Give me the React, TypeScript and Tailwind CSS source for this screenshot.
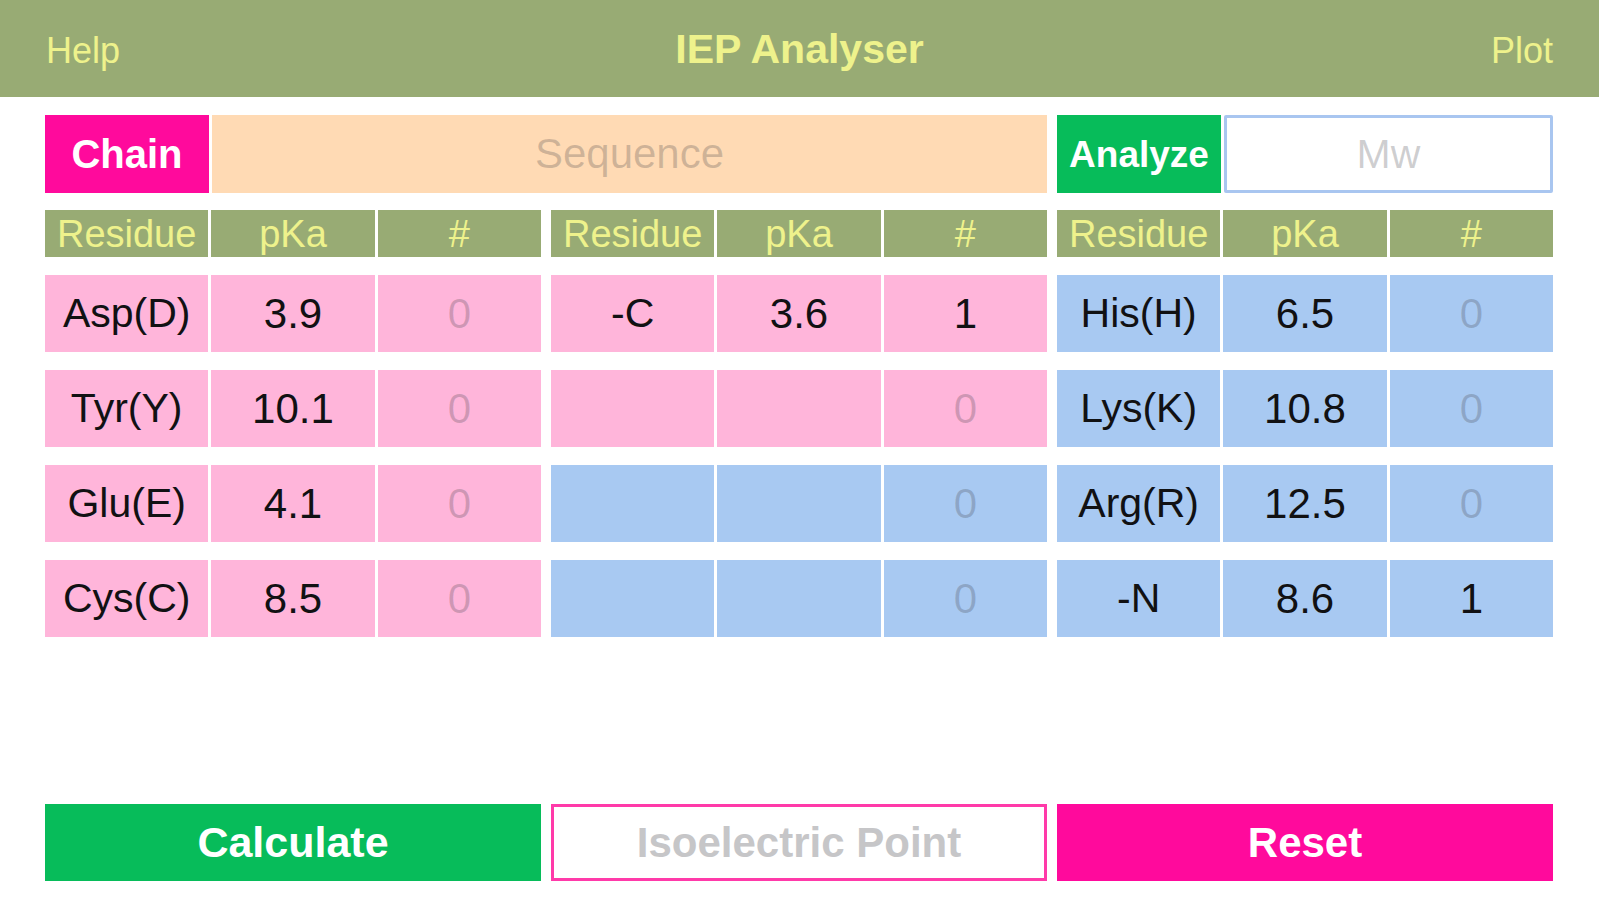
import React from "react";

type Cell = { label: string; pka: string; count: string; dim: boolean };

const PINK = "bg-[#ffb5da]";
const BLUE = "bg-[#a8c9f2]";

const groups: { rows: (Cell & { color: string })[] }[] = [
  {
    rows: [
      { label: "Asp(D)", pka: "3.9", count: "0", dim: true, color: PINK },
      { label: "Tyr(Y)", pka: "10.1", count: "0", dim: true, color: PINK },
      { label: "Glu(E)", pka: "4.1", count: "0", dim: true, color: PINK },
      { label: "Cys(C)", pka: "8.5", count: "0", dim: true, color: PINK },
    ],
  },
  {
    rows: [
      { label: "-C", pka: "3.6", count: "1", dim: false, color: PINK },
      { label: "", pka: "", count: "0", dim: true, color: PINK },
      { label: "", pka: "", count: "0", dim: true, color: BLUE },
      { label: "", pka: "", count: "0", dim: true, color: BLUE },
    ],
  },
  {
    rows: [
      { label: "His(H)", pka: "6.5", count: "0", dim: true, color: BLUE },
      { label: "Lys(K)", pka: "10.8", count: "0", dim: true, color: BLUE },
      { label: "Arg(R)", pka: "12.5", count: "0", dim: true, color: BLUE },
      { label: "-N", pka: "8.6", count: "1", dim: false, color: BLUE },
    ],
  },
];

function HeaderCells() {
  return (
    <div className="grid grid-cols-3 gap-x-[3px]">
      {["Residue", "pKa", "#"].map((t) => (
        <div
          key={t}
          className="h-[47px] bg-[#98ab74] flex items-center justify-center text-[38px] leading-none text-[#eef28c]"
        >
          {t}
        </div>
      ))}
    </div>
  );
}

export default function App() {
  return (
    <div
      className="h-screen w-full bg-white flex flex-col overflow-hidden"
      style={{ fontFamily: '"Liberation Sans", Arial, sans-serif' }}
    >
      {/* Top bar */}
      <div className="h-[97px] shrink-0 bg-[#98ab74] flex items-center justify-between px-[46px] relative">
        <span className="text-[36px] leading-none text-[#eef28c] mt-[4px]">Help</span>
        <span className="absolute left-1/2 top-1/2 -translate-x-1/2 -translate-y-1/2 text-[41px] font-bold leading-none text-[#eef28c]">
          IEP Analyser
        </span>
        <span className="text-[36px] leading-none text-[#eef28c] mt-[4px]">Plot</span>
      </div>

      <div className="px-[45px] pr-[46px] pt-[18px] flex flex-col flex-1">
        {/* Input row */}
        <div className="grid grid-cols-3 gap-x-[10px] h-[78px]">
          <div className="col-span-2 flex gap-x-[3px]">
            <div className="w-[164px] shrink-0 bg-[#ff0a9c] flex items-center justify-center text-white text-[40px] font-bold leading-none">
              Chain
            </div>
            <div className="flex-1 bg-[#ffdab4] flex items-center justify-center text-[42px] leading-none text-[#3c3c43]/25">
              Sequence
            </div>
          </div>
          <div className="flex gap-x-[3px]">
            <div className="w-[164px] shrink-0 bg-[#07bc5a] flex items-center justify-center text-white text-[37px] font-bold leading-none">
              Analyze
            </div>
            <div className="flex-1 bg-white border-[3px] border-[#a9c6f0] rounded-[2px] flex items-center justify-center text-[41px] leading-none text-[#3c3c43]/25">
              Mw
            </div>
          </div>
        </div>

        {/* Column headers */}
        <div className="grid grid-cols-3 gap-x-[10px] mt-[17px]">
          <HeaderCells />
          <HeaderCells />
          <HeaderCells />
        </div>

        {/* Data */}
        <div className="grid grid-cols-3 gap-x-[10px] mt-[18px]">
          {groups.map((g, gi) => (
            <div key={gi} className="flex flex-col gap-y-[18px]">
              {g.rows.map((r, ri) => (
                <div key={ri} className="grid grid-cols-3 gap-x-[3px] h-[77px]">
                  <div className={`${r.color} flex items-center justify-center text-[41px] leading-none text-[#111113]`}>
                    {r.label}
                  </div>
                  <div className={`${r.color} flex items-center justify-center text-[42px] leading-none text-[#111113]`}>
                    {r.pka}
                  </div>
                  <div
                    className={`${r.color} flex items-center justify-center text-[42px] leading-none ${
                      r.dim ? "text-[#3c3c43]/25" : "text-[#111113]"
                    }`}
                  >
                    {r.count}
                  </div>
                </div>
              ))}
            </div>
          ))}
        </div>

        {/* Bottom buttons */}
        <div className="mt-auto mb-[19px] grid grid-cols-3 gap-x-[10px] h-[77px]">
          <div className="bg-[#07bc5a] flex items-center justify-center text-white text-[43px] font-bold leading-none">
            Calculate
          </div>
          <div className="bg-white border-[3px] border-[#ff3aa9] flex items-center justify-center text-[42px] font-bold leading-none text-[#c6c6c8]">
            Isoelectric Point
          </div>
          <div className="bg-[#ff0a9c] flex items-center justify-center text-white text-[42px] font-bold leading-none">
            Reset
          </div>
        </div>
      </div>
    </div>
  );
}
